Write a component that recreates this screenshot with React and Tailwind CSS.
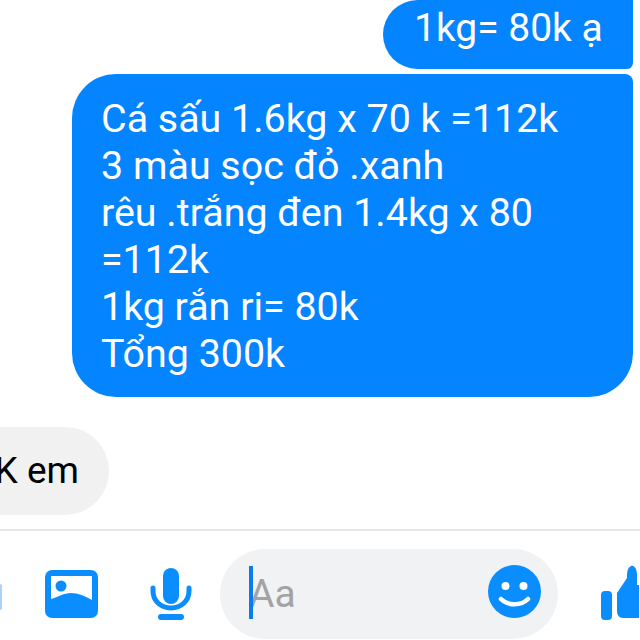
export default function App() {
  return (
    <div className="w-[640px] h-[640px] overflow-hidden bg-white flex flex-col font-['Roboto',sans-serif]">
      <div className="flex flex-col items-end pr-[7px] gap-[5px]">
        <div className="w-[250px] h-[69px] pl-[31px] pt-[5px] bg-[#0584ff] rounded-l-[44px] rounded-br-[8px] text-white text-[39px] leading-[46px] whitespace-nowrap">1kg= 80k ạ</div>
        <div className="w-[561px] h-[323px] pl-[29px] pt-[21px] bg-[#0584ff] rounded-l-[44px] rounded-tr-[8px] rounded-br-[44px] text-white text-[39.4px] leading-[47px] whitespace-pre">
          {"Cá sấu 1.6kg x 70 k =112k\n3 màu sọc đỏ .xanh\nrêu .trắng đen 1.4kg x 80\n=112k\n1kg rắn ri= 80k\nTổng 300k"}
        </div>
      </div>
      <div className="mt-[30px] w-[109px] h-[88px] bg-[#f1f1f1] rounded-r-[44px] flex items-center justify-end pr-[30px] text-[37px] text-black whitespace-nowrap overflow-hidden">K em</div>
      <div className="mt-[14px] h-[2px] bg-[#e6e6e6]" />
      <div className="flex-1 flex items-start pt-[18px] relative">
        <div className="w-[2px] h-[26px] mt-[35px] bg-[#a9d3fb] rounded-r-[2px]" />
        <svg className="ml-[43px] mt-[20px] w-[53px] h-[50px]" viewBox="0 0 53 50" fill="none">
          <rect width="53" height="48" y="1" rx="7" fill="#0a8eff" />
          <path d="M6 7H47V31C40 27 33 24 26 24C19 24 13 28 6 30Z" fill="#fff" />
          <circle cx="16" cy="17" r="5.5" fill="#0a8eff" />
        </svg>
        <svg className="ml-[52px] mt-[18px] w-[42px] h-[56px]" viewBox="0 0 42 56" fill="none">
          <rect x="13" y="1" width="16" height="36" rx="8" fill="#0a8eff" />
          <path d="M3 21V24C3 34 11 41 21 41C31 41 39 34 39 24V21" stroke="#0a8eff" strokeWidth="5" strokeLinecap="round" />
          <rect x="8" y="47" width="26" height="6" rx="3" fill="#0a8eff" />
        </svg>
        <div className="ml-[28px] w-[338px] h-[90px] bg-[#f1f2f4] rounded-[45px] relative flex items-center shrink-0">
          <span className="ml-[29px] text-[39px] text-[#a3a3a3] leading-none">Aa</span>
          <div className="absolute left-[29px] top-[17px] w-[4px] h-[53px] bg-[#0b7cf0]" />
          <svg className="absolute right-[17px] top-[16px] w-[53px] h-[53px]" viewBox="0 0 53 53" fill="none">
            <circle cx="26.5" cy="26.5" r="26.5" fill="#0a8eff" />
            <circle cx="17.5" cy="21" r="4" fill="#fff" />
            <circle cx="35.5" cy="21" r="4" fill="#fff" />
            <path d="M13 34C20 41 33 41 40 34" stroke="#fff" strokeWidth="4.5" strokeLinecap="round" />
          </svg>
        </div>
        <svg className="ml-[43px] mt-[16px] w-[38px] h-[56px] shrink-0" viewBox="0 0 38 56" fill="none">
          <rect x="0" y="26" width="11" height="29" rx="4" fill="#0a8eff" />
          <path d="M16 28L26 13C26 8 26 3 30 1C34 0 36 5 36 10V20H38V53H22C18 53 16 50 16 46Z" fill="#0a8eff" />
        </svg>
      </div>
    </div>
  );
}
